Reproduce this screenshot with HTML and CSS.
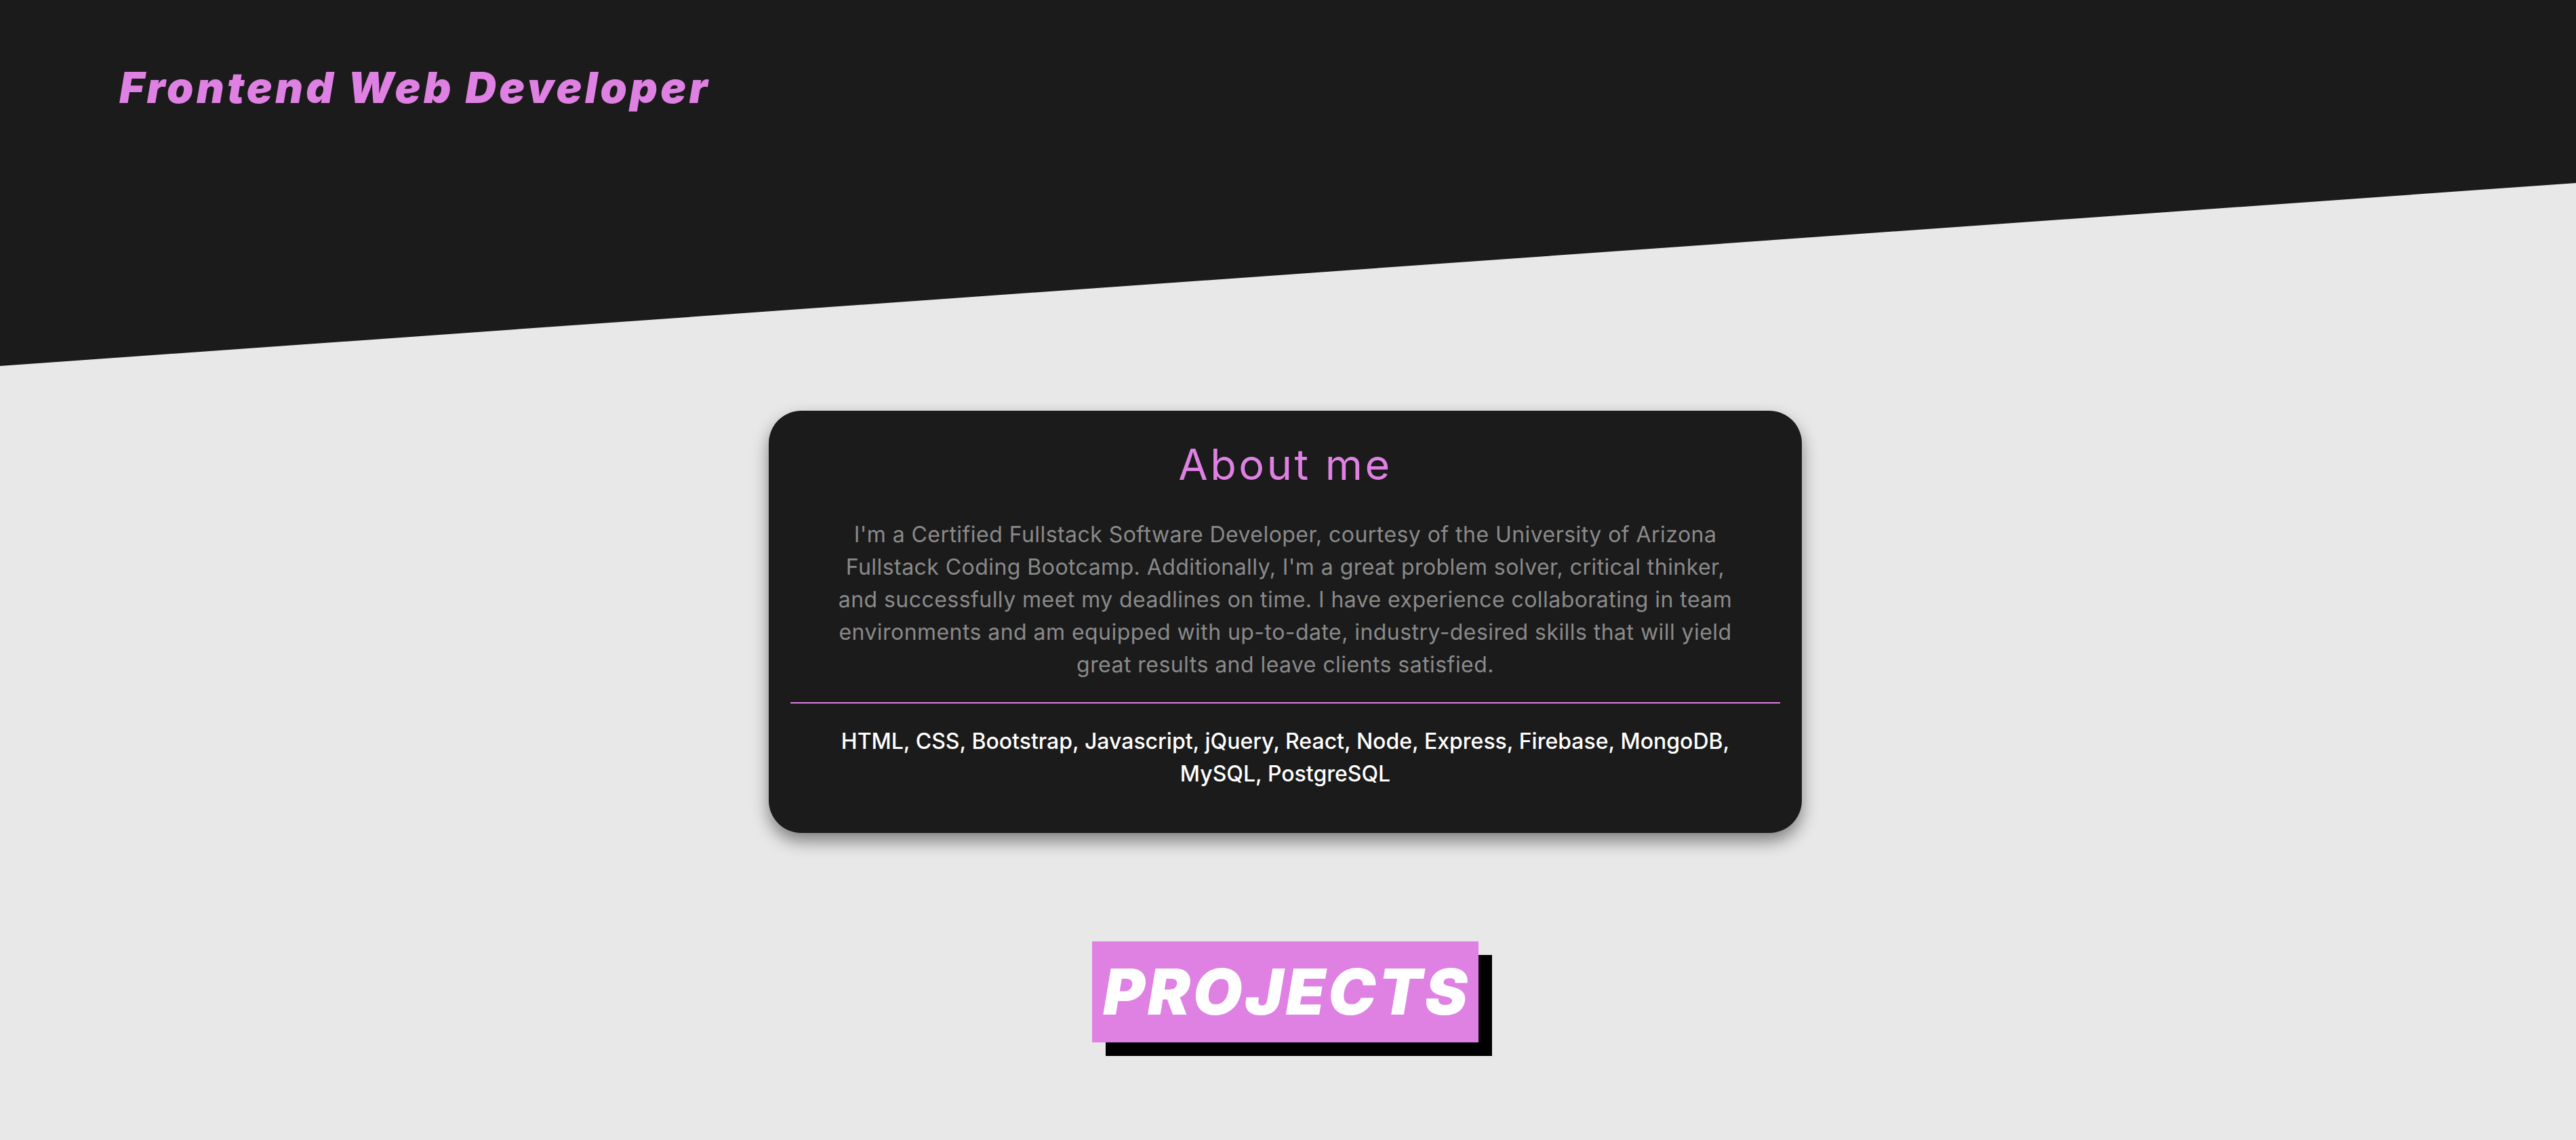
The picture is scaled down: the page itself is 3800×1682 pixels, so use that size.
FILE: index.html
```html
<!DOCTYPE html>
<html lang="en">
<head>
<meta charset="utf-8">
<title>Frontend Web Developer</title>
<link rel="stylesheet" href="styles.css">
</head>
<body>
<header class="hero">
  <h1 class="hero-title">Frontend Web Developer</h1>
</header>
<main class="content">
  <section class="about-card">
    <h2 class="about-title">About me</h2>
    <p class="about-text">I'm a Certified Fullstack Software Developer, courtesy of the University of Arizona Fullstack Coding Bootcamp. Additionally, I'm a great problem solver, critical thinker, and successfully meet my deadlines on time. I have experience collaborating in team environments and am equipped with up-to-date, industry-desired skills that will yield great results and leave clients satisfied.</p>
    <hr class="about-divider">
    <p class="about-skills">HTML, CSS, Bootstrap, Javascript, jQuery, React, Node, Express, Firebase, MongoDB, MySQL, PostgreSQL</p>
  </section>
  <section class="projects">
    <h2 class="projects-title">PROJECTS</h2>
  </section>
</main>
</body>
</html>
```
FILE: styles.css
```css
html, body {
  margin: 0;
  padding: 0;
}
body {
  background: #e8e8e8;
  font-family: "Inter", "Liberation Sans", sans-serif;
  min-height: 100vh;
}
.hero {
  height: 540px;
  box-sizing: border-box;
  background: #1b1b1b;
  clip-path: polygon(0 0, 100% 0, 100% 50%, 0 100%);
  padding: 98px 0 0 176px;
}
.hero-title {
  margin: 0;
  font-family: "Inter", "Liberation Sans", sans-serif;
  font-weight: 900;
  font-style: italic;
  font-size: 63px;
  line-height: 1;
  color: #df80e3;
  letter-spacing: 4.3px;
}
.content {
  padding-right: 8px;
  display: flex;
  flex-direction: column;
  align-items: center;
}
.about-card {
  margin-top: 66px;
  width: 1524px;
  box-sizing: border-box;
  padding: 48px 32px 63px;
  background: #1b1b1b;
  border-radius: 48px;
  box-shadow: 0 12px 24px rgba(0, 0, 0, 0.45);
  text-align: center;
}
.about-title {
  margin: 0;
  font-weight: 400;
  font-size: 63px;
  line-height: 1;
  letter-spacing: 3.5px;
  color: #df80e3;
}
.about-text {
  margin: 48px auto 0;
  max-width: 1352px;
  font-size: 32px;
  line-height: 48px;
  letter-spacing: 0.45px;
  color: #8a8a8a;
}
.about-divider {
  margin: 31px 0 0;
  border: 0;
  border-top: 2px solid #df80e3;
  height: 0;
}
.about-skills {
  margin: 32px auto 0;
  max-width: 1380px;
  font-size: 32px;
  line-height: 48px;
  font-weight: 500;
  color: #ffffff;
}
.projects {
  margin-top: 160px;
  display: flex;
  justify-content: center;
}
.projects-title {
  margin: 0;
  display: inline-block;
  padding: 0 12px 0 16px;
  height: 149px;
  box-sizing: border-box;
  background: #df80e3;
  box-shadow: 20px 20px 0 #000;
  color: #fff;
  font-weight: 900;
  font-style: italic;
  font-size: 94px;
  line-height: 149px;
  letter-spacing: 4px;
}
```
